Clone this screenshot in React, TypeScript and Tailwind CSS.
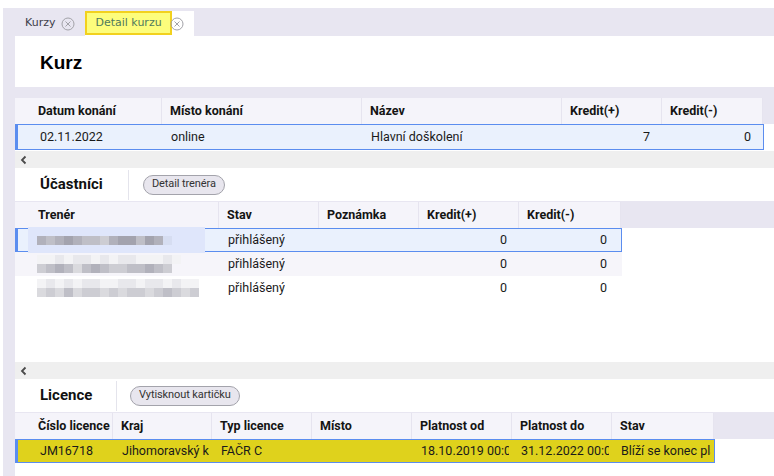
import React from "react";

type Col = { label: string; w: string; dw?: string; right?: boolean; pr?: string };

const kurzCols: Col[] = [
  { label: "Datum konání", w: "w-[147px]", dw: "w-[144px]" },
  { label: "Místo konání", w: "w-[200px]" },
  { label: "Název", w: "w-[200px]" },
  { label: "Kredit(+)", w: "w-[100px]", right: true },
  { label: "Kredit(-)", w: "w-[101px]", right: true },
];

const trenerCols: Col[] = [
  { label: "Trenér", w: "w-[204px]", dw: "w-[201px]" },
  { label: "Stav", w: "w-[100px]" },
  { label: "Poznámka", w: "w-[100px]" },
  { label: "Kredit(+)", w: "w-[100px]", right: true },
  { label: "Kredit(-)", w: "w-[102px]", right: true, pr: "pr-[14px]" },
];

const licCols: Col[] = [
  { label: "Číslo licence", w: "w-[98px]", dw: "w-[95px]" },
  { label: "Kraj", w: "w-[99px]" },
  { label: "Typ licence", w: "w-[100px]" },
  { label: "Místo", w: "w-[100px]" },
  { label: "Platnost od", w: "w-[100px]" },
  { label: "Platnost do", w: "w-[100px]" },
  { label: "Stav", w: "w-[102px]" },
];

// pixel shades for the blurred trainer names
const pal: Record<string, string> = {
  "0": "bg-transparent",
  "1": "bg-[#f3f3f5]",
  "2": "bg-[#e8e8ec]",
  "3": "bg-[#dadade]",
  "4": "bg-[#cdcdd3]",
  "5": "bg-[#bfbfc7]",
  "6": "bg-[#b1b1bb]",
  "7": "bg-[#a3a3ae]",
  b: "bg-[#d6ddf1]",
};

function Pixels({ row }: { row: string }) {
  return (
    <div className="flex h-[9px]">
      {row.split("").map((ch, i) => (
        <div key={i} className={`h-[9px] w-[9px] ${pal[ch]}`} />
      ))}
    </div>
  );
}

function Blur({ rows, halo }: { rows: string[]; halo?: boolean }) {
  return (
    <>
      {halo && <div className="absolute -top-[2px] -bottom-[2px] left-[10px] w-[177px] bg-[#dfe6fb]" />}
      <div className="relative -ml-[3px] flex flex-col">
        {rows.map((r, i) => (
          <Pixels key={i} row={r} />
        ))}
      </div>
    </>
  );
}

function CloseIcon({ className = "" }: { className?: string }) {
  return (
    <svg width="14" height="14" viewBox="0 0 14 14" className={className}>
      <circle cx="7" cy="7" r="6" fill="none" stroke="#a2a2a8" strokeWidth="1" />
      <path d="M4.5 4.5 L9.5 9.5 M9.5 4.5 L4.5 9.5" stroke="#a2a2a8" strokeWidth="1" />
    </svg>
  );
}

function Header({ cols }: { cols: Col[] }) {
  return (
    <div className="flex">
      <div className="flex h-[26px] bg-[#f5f4fa]">
        {cols.map((c, i) => (
          <div
            key={c.label}
            className={`${c.w} flex shrink-0 items-center overflow-hidden whitespace-nowrap border-r border-[#e6e4ef] text-[12.5px] font-bold text-[#141414] ${i === 0 ? "pl-[23px]" : "pl-[8px]"}`}
          >
            {c.label}
          </div>
        ))}
      </div>
    </div>
  );
}

function DataRow({
  cols,
  cells,
  tone,
  h = "h-[24px]",
}: {
  cols: Col[];
  cells: React.ReactNode[];
  tone: "sel" | "yellow" | "alt" | "plain";
  h?: string;
}) {
  const toneCls =
    tone === "sel"
      ? "border-[#5b8def] bg-[#eaf1fd]"
      : tone === "yellow"
        ? "border-[#5b8def] bg-[#dfd21c]"
        : tone === "alt"
          ? "border-transparent bg-[#f6f5fa]"
          : "border-transparent";
  return (
    <div className="flex">
      <div className={`flex ${h} border border-l-[3px] ${toneCls}`}>
        {cols.map((c, i) => (
          <div
            key={i}
            className={`${i === 0 ? c.dw : c.w} relative flex shrink-0 items-center ${
              c.right ? `justify-end ${c.pr ?? "pr-[12px]"}` : i === 0 ? "pl-[22px]" : "pl-[9px] pr-[3px]"
            }`}
          >
            {i === 0 ? cells[i] : <div className="min-w-0 overflow-hidden whitespace-nowrap">{cells[i]}</div>}
          </div>
        ))}
      </div>
    </div>
  );
}

function HScroll() {
  return (
    <div className="flex h-[17px] items-center bg-[#efefef] pl-[5px]">
      <svg width="7" height="10" viewBox="0 0 7 10">
        <path d="M5.5 1.5 L2 5 L5.5 8.5" fill="none" stroke="#4a4a4a" strokeWidth="1.8" />
      </svg>
    </div>
  );
}

function SectionHead({ title, tw, button, bm }: { title: string; tw: string; button: string; bm: string }) {
  return (
    <div className="flex h-[33px] items-center bg-white">
      <div className={`${tw} pl-[25px] text-[15px] font-bold text-[#111]`}>{title}</div>
      <div className="h-[30px] w-px bg-[#e4e4ec]" />
      <button
        className={`${bm} flex h-[20px] items-center rounded-full border border-[#a3a3ab] bg-[#e8e6ee] px-[8px] text-[11px] tracking-[-0.1px] text-[#333]`}
      >
        {button}
      </button>
    </div>
  );
}

export default function App() {
  return (
    <div className="h-[476px] w-[774px] overflow-hidden bg-white pl-[3px] pt-[8px] font-['Roboto',sans-serif] text-[12.5px] text-[#1a1a1a]">
      <div className="flex h-full flex-col bg-[#e8e6f1]">
        {/* tabs */}
        <div className="flex h-[28px] shrink-0 items-end pl-[22px] font-['DejaVu_Sans',sans-serif] text-[11px]">
          <div className="flex h-[25px] items-center gap-[6px] text-[#3e3e4a]">
            Kurzy
            <CloseIcon />
          </div>
          <div className="ml-[10px] flex h-[25px] items-center bg-white pr-[10px]">
            <div className="flex h-[24px] items-center self-start border-2 border-[#f2d11e] bg-[#fdfd7c] px-[8px] text-[#4f7a5c]">
              Detail kurzu
            </div>
            <CloseIcon className="-ml-[2px]" />
          </div>
        </div>

        <div className="ml-[12px] flex flex-1 flex-col">
          <div className="flex h-[51px] shrink-0 items-center bg-white pl-[25px] pt-[4px] font-['Liberation_Sans',sans-serif] text-[19px] font-bold text-black">
            Kurz
          </div>
          <div className="h-[11px] shrink-0" />

          <Header cols={kurzCols} />
          <div className="h-[27px] shrink-0 bg-white">
            <DataRow
              cols={kurzCols}
              tone="sel"
              h="h-[26px]"
              cells={["02.11.2022", "online", "Hlavní doškolení", "7", "0"]}
            />
          </div>
          <HScroll />

          <SectionHead title="Účastníci" tw="w-[113px]" button="Detail trenéra" bm="ml-[14px]" />
          <div className="h-px shrink-0" />
          <Header cols={trenerCols} />
          <div className="h-[134px] shrink-0 bg-white">
            <DataRow
              cols={trenerCols}
              tone="sel"
              cells={[<Blur halo rows={["65676554677576b"]} />, "přihlášený", "", "0", "0"]}
            />
            <DataRow
              cols={trenerCols}
              tone="alt"
              cells={[
                <Blur rows={["1121221212211121", "4565356544556540"]} />,
                "přihlášený",
                "",
                "0",
                "0",
              ]}
            />
            <DataRow
              cols={trenerCols}
              tone="plain"
              cells={[
                <Blur rows={["121212211221221211", "343534434344345434"]} />,
                "přihlášený",
                "",
                "0",
                "0",
              ]}
            />
          </div>
          <HScroll />

          <SectionHead title="Licence" tw="w-[101px]" button="Vytisknout kartičku" bm="ml-[13px]" />
          <div className="h-px shrink-0" />
          <Header cols={licCols} />
          <div className="flex-1 bg-white">
            <DataRow
              cols={licCols}
              tone="yellow"
              cells={[
                "JM16718",
                "Jihomoravský kraj",
                "FAČR C",
                "",
                "18.10.2019 00:00:00",
                "31.12.2022 00:00:00",
                "Blíží se konec platnosti",
              ]}
            />
          </div>
        </div>
      </div>
    </div>
  );
}
